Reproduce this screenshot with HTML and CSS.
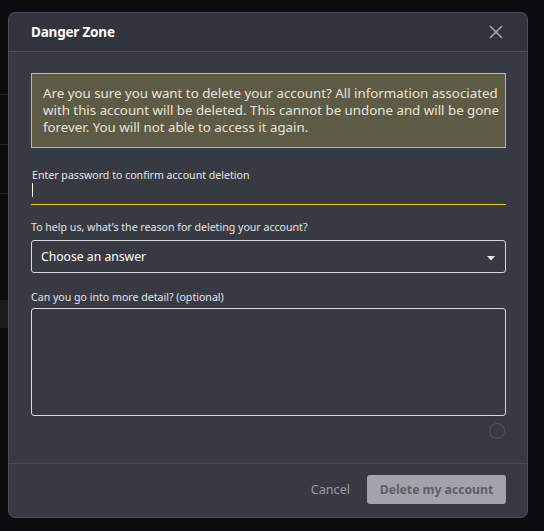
FILE: index.html
```html
<!DOCTYPE html>
<html>
<head>
<meta charset="utf-8">
<link rel="stylesheet" href="styles.css">
</head>
<body>
<div class="backdrop" aria-hidden="true">
  <div class="bg-line l1"></div>
  <div class="bg-line l2"></div>
  <div class="bg-line l3"></div>
  <div class="bg-block"></div>
</div>
<div class="modal">
  <div class="modal-header">
    <h2 class="modal-title">Danger Zone</h2>
    <button class="close" aria-label="Close">
      <svg width="14" height="14" viewBox="0 0 14 14"><path d="M1 1L13 13M13 1L1 13" stroke="#a5a7ae" stroke-width="1.6" fill="none"/></svg>
    </button>
  </div>
  <div class="modal-body">
    <div class="warning">Are you sure you want to delete your account? All information associated with this account will be deleted. This cannot be undone and will be gone forever. You will not able to access it again.</div>
    <label class="label label-pw">Enter password to confirm account deletion</label>
    <div class="pw-input"><span class="cursor"></span></div>
    <label class="label label-reason">To help us, what’s the reason for deleting your account?</label>
    <div class="select">
      <span>Choose an answer</span>
      <svg class="caret" width="8" height="5" viewBox="0 0 8 5"><path d="M0 0H8L4 4.5Z" fill="#e8e8ea"/></svg>
    </div>
    <label class="label label-detail">Can you go into more detail? (optional)</label>
    <div class="textarea"></div>
    <div class="counter-row"><span class="counter"></span></div>
  </div>
  <div class="modal-footer">
    <button class="btn-cancel">Cancel</button>
    <button class="btn-delete">Delete my account</button>
  </div>
</div>
</body>
</html>
```

FILE: styles.css
```css
* { box-sizing: border-box; }
html, body {
  margin: 0;
  padding: 0;
  background: #0b0c0f;
  width: 544px;
  height: 531px;
  overflow: hidden;
  font-family: "Noto Sans", "Open Sans", sans-serif;
}
body { position: relative; }

.backdrop {
  position: absolute;
  left: 0; top: 0;
  width: 8px; height: 531px;
}
.bg-line { position: absolute; left: 0; width: 8px; height: 1px; background: #25262b; }
.l1 { top: 94px; }
.l2 { top: 144px; }
.l3 { top: 193px; }
.bg-block { position: absolute; top: 300px; left: 0; width: 8px; height: 28px; background: #1a1b1f; }

.modal {
  position: absolute;
  left: 8px;
  top: 12px;
  width: 520px;
  height: 506px;
  background: #383a43;
  border: 1px solid #4b4e57;
  border-radius: 7px;
  overflow: hidden;
  display: flex;
  flex-direction: column;
}
.modal-header {
  height: 39px;
  flex: none;
  background: #31343c;
  border-bottom: 1px solid #4a4d55;
  display: flex;
  align-items: center;
  justify-content: space-between;
  padding: 0 24px 0 22px;
}
.modal-title {
  margin: 0;
  font-size: 13.5px;
  font-weight: 700;
  color: #ffffff;
  letter-spacing: -0.2px;
}
.close {
  background: none;
  border: 0;
  padding: 0;
  width: 14px;
  height: 14px;
  display: flex;
}
.modal-body {
  flex: 1;
  padding: 21px 21px 0 22px;
  display: flex;
  flex-direction: column;
}
.warning {
  height: 75px;
  background: #5d5a45;
  border: 1px solid #e2be1e;
  color: #e9e5d8;
  font-size: 13.3px;
  line-height: 17px;
  padding: 11px 4px 0 11px;
}
.label {
  display: block;
  color: #e4e5e8;
  font-size: 10.6px;
  line-height: 14px;
}
.label-pw { margin-top: 20px; padding-left: 1px; }
.pw-input {
  height: 23px;
  border-bottom: 1px solid #f2c200;
  padding: 1px 0 0 1px;
}
.cursor { display: block; width: 1px; height: 14px; background: #ffffff; }
.label-reason { margin-top: 15px; }
.select {
  margin-top: 6px;
  height: 33px;
  border: 1px solid #d8d9dc;
  border-radius: 3px;
  display: flex;
  align-items: center;
  justify-content: space-between;
  padding: 0 10px 0 9px;
  color: #ffffff;
  font-size: 12.2px;
}
.caret { margin-top: 4px; }
.label-detail { margin-top: 17px; }
.textarea {
  margin-top: 4px;
  height: 108px;
  border: 1px solid #d8d9dc;
  border-radius: 3px;
}
.counter-row { display: flex; justify-content: flex-end; margin-top: 7px; padding-right: 1px; }
.counter {
  width: 16px; height: 16px;
  border: 1.5px solid #4f525c;
  border-radius: 50%;
}
.modal-footer {
  height: 54px;
  flex: none;
  border-top: 1px solid #4a4d55;
  display: flex;
  align-items: center;
  justify-content: flex-end;
  padding: 0 21px 2px 0;
  gap: 17px;
}
.btn-cancel {
  background: none;
  border: 0;
  color: #9a9ca4;
  font-family: inherit;
  font-size: 12.6px;
  padding: 0;
}
.btn-delete {
  width: 139px;
  height: 29px;
  background: #a3a3ac;
  border: 0;
  border-radius: 3px;
  color: #5d5e68;
  font-family: inherit;
  font-weight: 700;
  font-size: 12.2px;
  padding: 0;
}
```
